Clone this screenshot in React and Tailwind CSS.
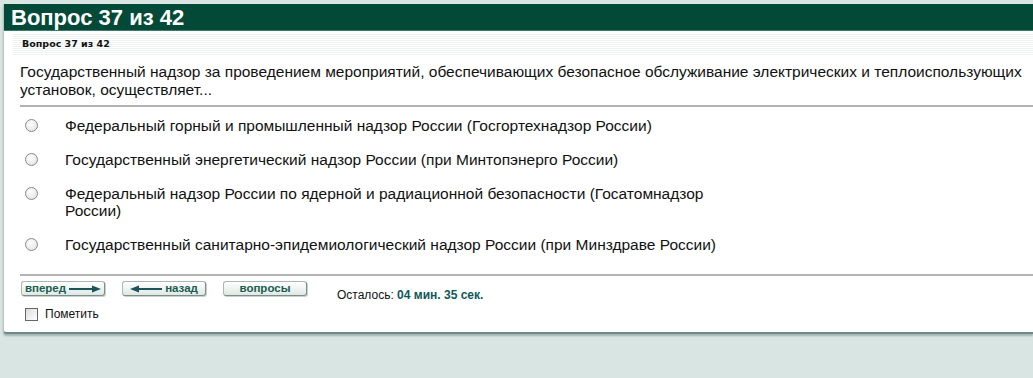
import React, { useState } from "react";

const options = [
  "Федеральный горный и промышленный надзор России (Госгортехнадзор России)",
  "Государственный энергетический надзор России (при Минтопэнерго России)",
  "Федеральный надзор России по ядерной и радиационной безопасности (Госатомнадзор России)",
  "Государственный санитарно-эпидемиологический надзор России (при Минздраве России)",
];

// small arrow drawn like the original gif buttons
const Arrow = ({ left }) => (
  <svg width="32" height="8" viewBox="0 0 32 8" className="shrink-0">
    {left ? (
      <>
        <path d="M0 4 L9 0.5 L9 7.5 Z" fill="#1c5558" />
        <rect x="8" y="3" width="24" height="2" fill="#1c5558" />
      </>
    ) : (
      <>
        <rect x="0" y="3" width="24" height="2" fill="#1c5558" />
        <path d="M32 4 L23 0.5 L23 7.5 Z" fill="#1c5558" />
      </>
    )}
  </svg>
);

const NavButton = ({ children }) => (
  <button className="flex h-[15px] w-[84px] items-center justify-center gap-[3px] rounded-[3px] border border-[#a9b8b2] border-r-[#7d8d88] border-b-[#7d8d88] bg-[linear-gradient(#ffffff,#dfe8e4)] text-[11.5px] font-bold leading-none text-[#1b5d50] shadow-[1px_1px_0_#c5cfcb]">
    {children}
  </button>
);

export default function App() {
  const [selected, setSelected] = useState(null);
  const [marked, setMarked] = useState(false);

  return (
    <div className="min-h-screen bg-[#d9e5e2] pl-[3px] pt-[4px] font-['Liberation_Sans',Arial,sans-serif] text-[#111]">
      <div className="rounded-bl-[4px] border-b-2 border-l border-[#6f8a84] border-l-[#b9c4c1] bg-white shadow-[0_2px_2px_rgba(60,90,80,0.35)]">
        {/* Header */}
        <div className="h-[27px] border-b border-[#3f7c69] bg-[#024a37] pl-[7px] text-[22px] font-bold leading-[28px] text-white">
          Вопрос 37 из 42
        </div>

        {/* Striped sub-title */}
        <div className="pl-[9px] pt-[3px]">
          <div className="flex h-[21px] items-center bg-[repeating-linear-gradient(#eef2f0_0px,#eef2f0_1px,#ffffff_1px,#ffffff_2px)] pl-[9px] font-['DejaVu_Sans',Verdana,sans-serif] text-[9.5px] font-bold">
            Вопрос 37 из 42
          </div>
        </div>

        {/* Question */}
        <div className="pl-[16px]">
          <p className="pr-[8px] pt-[8px] text-[15.5px] leading-[18px]">
            Государственный надзор за проведением мероприятий, обеспечивающих безопасное обслуживание электрических и теплоиспользующих установок, осуществляет...
          </p>
          <div className="mt-[6px] h-[2px] bg-[#b3b3b3]" />

          <div className="pb-[13px] pt-[1px]">
            {options.map((text, i) => (
              <label key={i} className="flex cursor-pointer items-start py-[8.5px]">
                <span className="ml-[5px] flex w-[13px] shrink-0 pt-[2.5px]">
                  <span
                    onClick={() => setSelected(i)}
                    className="flex h-[13px] w-[13px] items-center justify-center rounded-full border border-[#8a8a8a] bg-[radial-gradient(circle_at_40%_35%,#ffffff,#dcdcdc)]"
                  >
                    {selected === i && <span className="h-[5px] w-[5px] rounded-full bg-[#222]" />}
                  </span>
                </span>
                <span className="ml-[27px] max-w-[680px] text-[15.5px] leading-[17px]">{text}</span>
              </label>
            ))}
          </div>
          <div className="h-[2px] bg-[#b3b3b3]" />

          {/* Controls */}
          <div className="flex items-start pl-[1px] pt-[5px]">
            <NavButton>
              вперед <Arrow />
            </NavButton>
            <div className="ml-[17px]">
              <NavButton>
                <Arrow left /> назад
              </NavButton>
            </div>
            <div className="ml-[17px]">
              <NavButton>вопросы</NavButton>
            </div>
            <div className="ml-[30px] pt-[7px] text-[12px] leading-[14px]">
              Осталось: <span className="font-bold text-[#0e5858]">04 мин. 35 сек.</span>
            </div>
          </div>
          <label className="flex cursor-pointer items-center gap-[7px] pb-[9px] pl-[5px] pt-[3px] text-[12px]">
            <span
              onClick={() => setMarked(!marked)}
              className="flex h-[13px] w-[13px] items-center justify-center border border-[#666] bg-[linear-gradient(135deg,#dcdcdc,#ffffff)] text-[10px] leading-none"
            >
              {marked ? "✓" : ""}
            </span>
            Пометить
          </label>
        </div>
      </div>
    </div>
  );
}
